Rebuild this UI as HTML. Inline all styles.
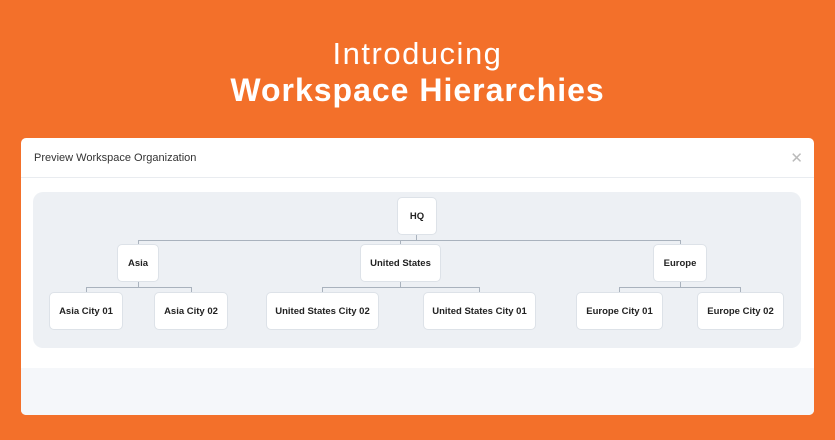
<!DOCTYPE html><html><head><style>
body{margin:0;width:835px;height:440px;background:#f3702a;font-family:"Liberation Sans",sans-serif;position:relative;overflow:hidden}
.t1{position:absolute;top:36px;width:100%;text-align:center;color:#fff;font-size:31px;font-weight:300;letter-spacing:1.5px}
.t2{position:absolute;top:72px;width:100%;text-align:center;color:#fff;font-size:32px;font-weight:bold;letter-spacing:1px}
.card{position:absolute;left:21px;top:138px;width:793px;height:277px;background:#fff;border-radius:5px;overflow:hidden}
.hd{position:absolute;left:13px;top:14px;font-size:11px;color:#333}
.x{position:absolute;right:11px;top:11px;color:#bbb;font-size:15px}
.ln{position:absolute;left:0;right:0;top:39px;height:1px;background:#e9ecf0}
.panel{position:absolute;left:12px;top:54px;width:768px;height:156px;background:#edf0f4;border-radius:10px}
.ft{position:absolute;left:0;right:0;top:230px;bottom:0;background:#f5f7fa}
.n{position:absolute;background:#fff;border:1px solid #dde2e8;border-radius:5px;box-sizing:border-box;display:flex;align-items:center;justify-content:center;font-size:9.5px;font-weight:bold;color:#222}
.h{position:absolute;height:1px;background:#a9b2bd}.v{position:absolute;width:1px;background:#a9b2bd}
</style></head><body>
<div class="t1">Introducing</div>
<div class="t2">Workspace Hierarchies</div>
<div class="card"><div class="hd">Preview Workspace Organization</div><div class="x">✕</div><div class="ln"></div>
<div class="ft"></div><div class="panel"></div></div>
<div class="h" style="left:138px;top:240px;width:542px"></div>
<div class="v" style="left:416px;top:234px;height:6px"></div>
<div class="v" style="left:138px;top:240px;height:4px"></div>
<div class="v" style="left:400px;top:240px;height:4px"></div>
<div class="v" style="left:680px;top:240px;height:4px"></div>
<div class="h" style="left:86px;top:287px;width:105px"></div>
<div class="v" style="left:138px;top:282px;height:5px"></div>
<div class="v" style="left:86px;top:287px;height:5px"></div><div class="v" style="left:191px;top:287px;height:5px"></div>
<div class="h" style="left:322px;top:287px;width:157px"></div>
<div class="v" style="left:400px;top:282px;height:5px"></div>
<div class="v" style="left:322px;top:287px;height:5px"></div><div class="v" style="left:479px;top:287px;height:5px"></div>
<div class="h" style="left:619px;top:287px;width:121px"></div>
<div class="v" style="left:680px;top:282px;height:5px"></div>
<div class="v" style="left:619px;top:287px;height:5px"></div><div class="v" style="left:740px;top:287px;height:5px"></div>
<div class="n" style="left:397px;top:197px;width:40px;height:38px">HQ</div>
<div class="n" style="left:117px;top:244px;width:42px;height:38px">Asia</div>
<div class="n" style="left:360px;top:244px;width:81px;height:38px">United States</div>
<div class="n" style="left:653px;top:244px;width:54px;height:38px">Europe</div>
<div class="n" style="left:49px;top:292px;width:74px;height:38px">Asia City 01</div>
<div class="n" style="left:154px;top:292px;width:74px;height:38px">Asia City 02</div>
<div class="n" style="left:266px;top:292px;width:113px;height:38px">United States City 02</div>
<div class="n" style="left:423px;top:292px;width:113px;height:38px">United States City 01</div>
<div class="n" style="left:576px;top:292px;width:87px;height:38px">Europe City 01</div>
<div class="n" style="left:697px;top:292px;width:87px;height:38px">Europe City 02</div>
</body></html>
